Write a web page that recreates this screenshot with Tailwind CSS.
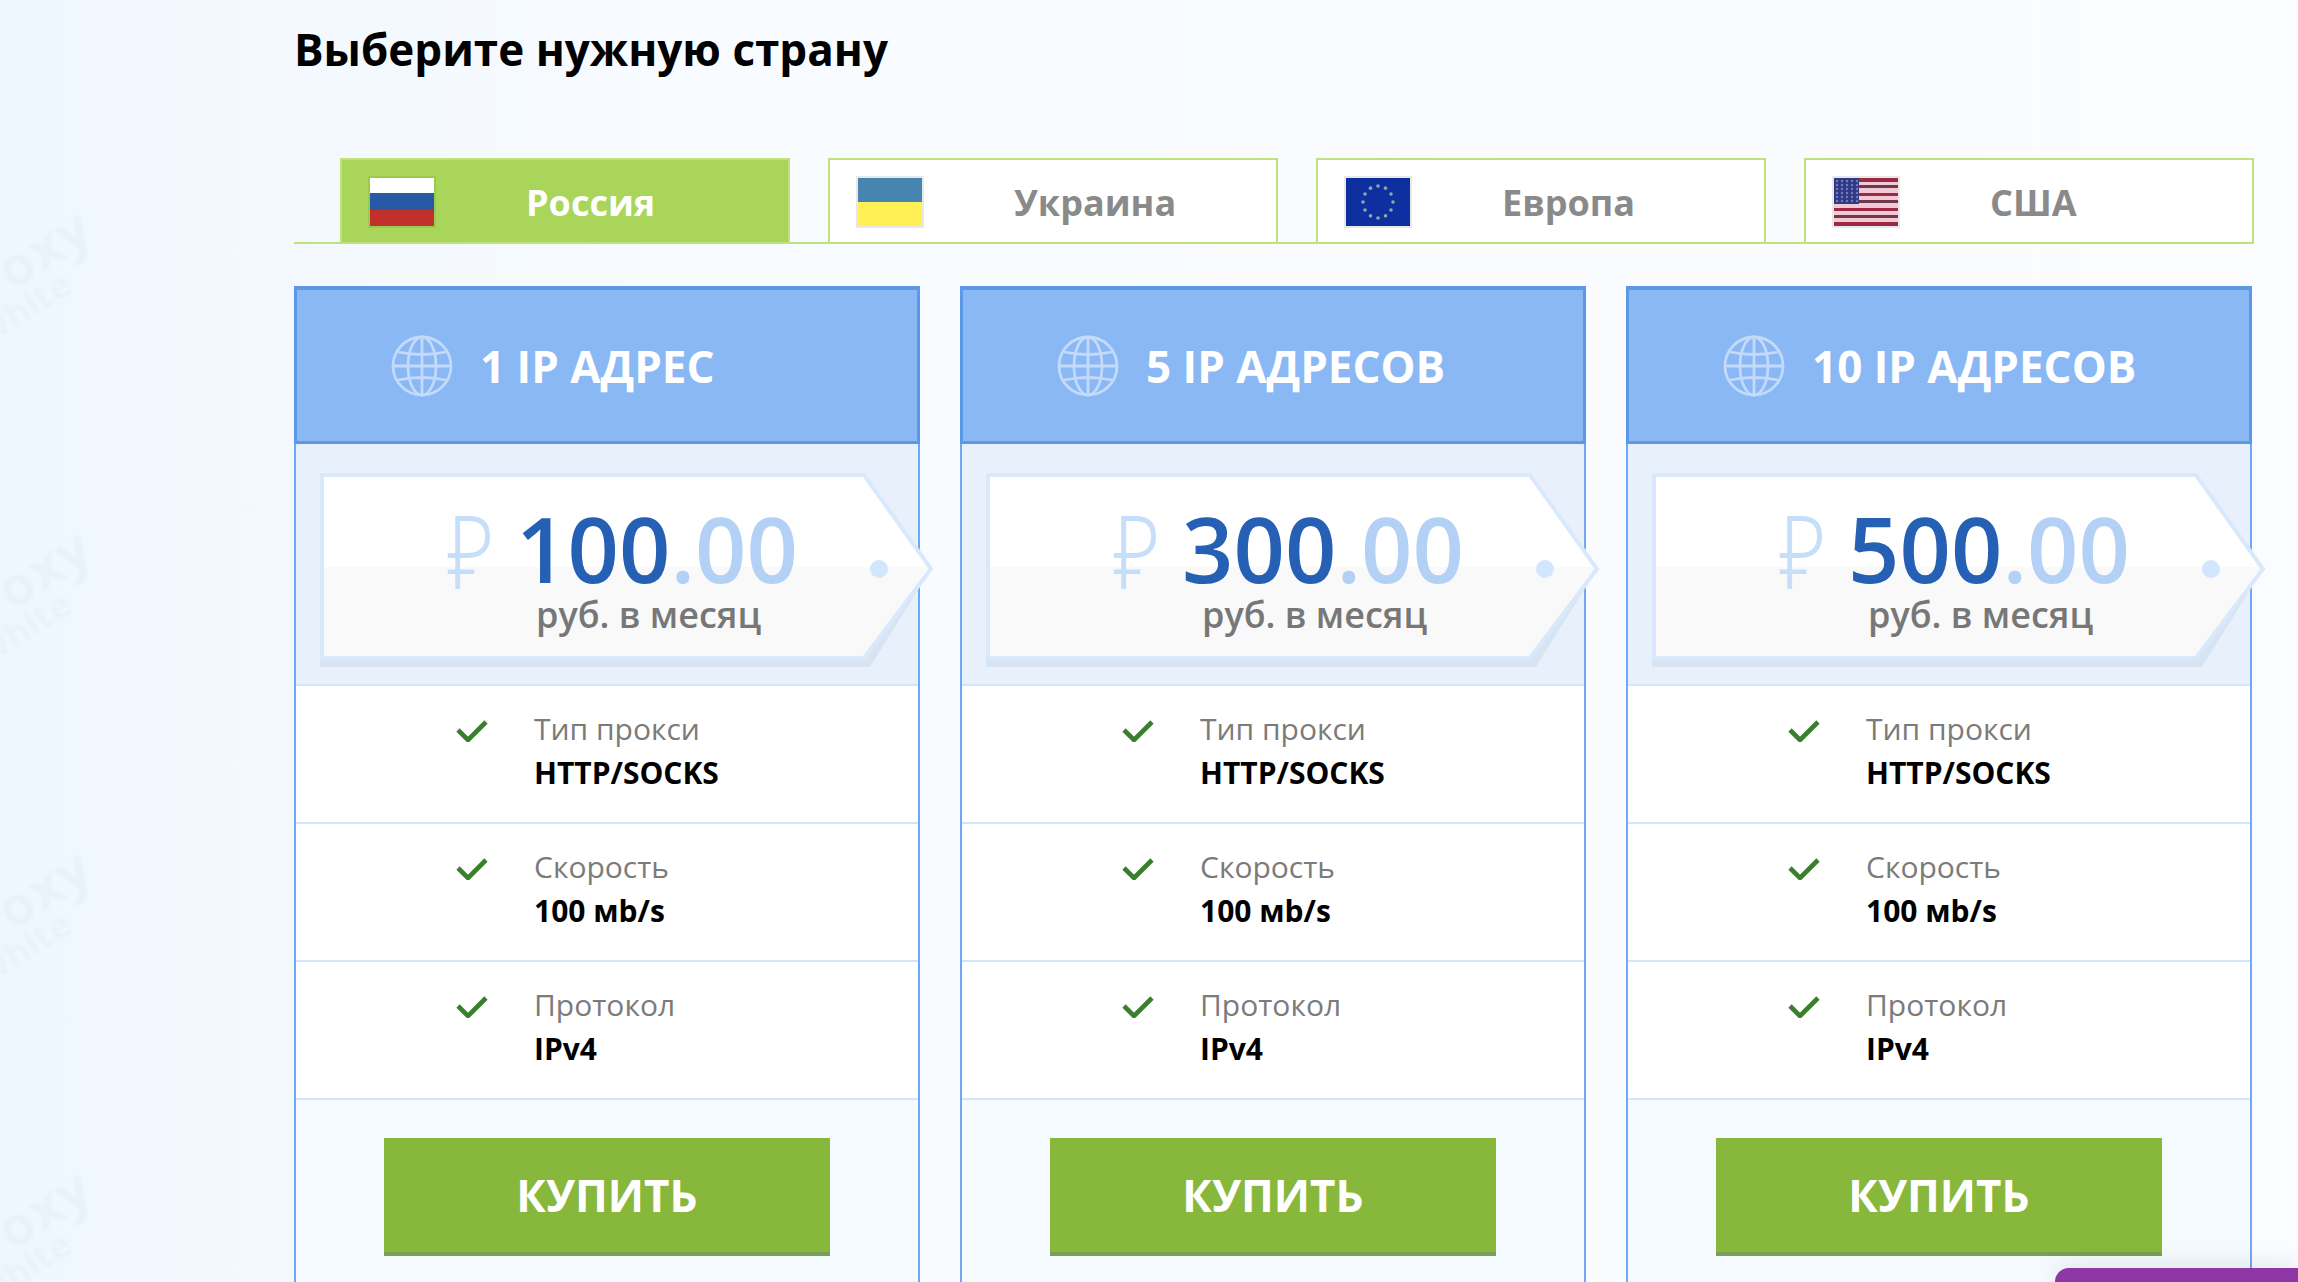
<!DOCTYPE html>
<html lang="ru">
<head>
    <meta charset="UTF-8">
    <title>Выберите нужную страну</title>
    <script src="https://cdn.jsdelivr.net/npm/@tailwindcss/browser@4"></script>
</head>
<body class="m-0">
    <div class="relative h-[1282px] w-[2298px] overflow-hidden bg-gradient-to-r from-[#eff7fe] via-[#f8fbff] via-30% to-[#fbfcff] font-['Open_Sans','DejaVu_Sans',sans-serif]">

        <!-- Watermark of the page background -->
        <div id="marks"></div>

        <div class="relative pl-[294px]">
            <h1 class="h-[158px] pt-[27px] text-[44px] leading-[44px] font-bold text-black">Выберите нужную страну</h1>

            <!-- Country tabs -->
            <div id="tabs" class="flex h-[86px] w-[1960px] gap-[38px] border-b-2 border-[#c0e27c] pl-[46px]"></div>

            <!-- Plans -->
            <div id="plans" class="mt-[42px] flex gap-[40px]"></div>
        </div>

        <!-- Chat widget peeking in from the bottom -->
        <div class="absolute bottom-0 left-[2055px] h-[14px] w-[243px] rounded-tl-[14px] bg-[#8e36a6] shadow-[0_0_24px_rgba(0,0,0,0.14)]"></div>
    </div>

    <script>
        const flags = {
            ru: `<rect width="64" height="48" fill="#c32f2a"/><rect width="64" height="32" fill="#2759a5"/><rect width="64" height="15" fill="#fff"/>`,
            ua: `<rect width="64" height="48" fill="#fef055"/><rect width="64" height="24" fill="#4685b0"/>`,
            eu: `<rect width="64" height="48" fill="#0e2f9f"/>` + [...Array(12)].map((_, i) => {
                const a = i * Math.PI / 6;
                return `<circle cx="${32 + 15 * Math.sin(a)}" cy="${24 - 16 * Math.cos(a)}" r="1.8" fill="#8fa9a8"/>`;
            }).join(""),
            us: `<rect width="64" height="48" fill="#f4c9d6"/>` + [0, 7, 15, 22, 30, 37, 44].map((y, i) =>
                `<rect y="${y}" width="64" height="${i == 0 || i == 6 ? 4 : 3}" fill="${i % 2 ? "#6d3a50" : "#9c2a45"}"/>`).join("") +
                `<rect width="25" height="26" fill="#2f3a86"/>` + [...Array(30)].map((_, i) =>
                `<circle cx="${3 + (i % 5) * 5}" cy="${3 + Math.floor(i / 5) * 4}" r="1.2" fill="#7b78b8"/>`).join("")
        };

        const countries = [
            { name: "Россия", flag: "ru", active: true },
            { name: "Украина", flag: "ua" },
            { name: "Европа", flag: "eu" },
            { name: "США", flag: "us" }
        ];

        document.getElementById("tabs").innerHTML = countries.map(c => `
            <div class="box-border flex h-[86px] w-[450px] items-start gap-[90px] border-2 border-[#c0e27c] pl-[26px] pt-[16px] ${c.active ? "bg-[#aad55b] text-white" : "bg-white text-[#8a8a8a]"}">
                <svg class="box-content block h-[48px] w-[64px] shrink-0 border-2 ${c.active ? "border-[#9acb4e]" : "border-[#e8e8e8]"}" viewBox="0 0 64 48">${flags[c.flag]}</svg>
                <span class="mt-[5px] text-[36px] leading-[44px] font-bold">${c.name}</span>
            </div>`).join("");

        const plans = [
            { title: "1 IP АДРЕС", price: "100" },
            { title: "5 IP АДРЕСОВ", price: "300" },
            { title: "10 IP АДРЕСОВ", price: "500" }
        ];

        const features = [
            ["Тип прокси", "HTTP/SOCKS"],
            ["Скорость", "100 мb/s"],
            ["Протокол", "IPv4"]
        ];

        const globe = `
            <svg class="h-[62px] w-[62px] shrink-0 blur-[0.6px]" viewBox="0 0 62 62" fill="none" stroke="#c3dafa" stroke-width="2.8">
                <circle cx="31" cy="31" r="29"/>
                <ellipse cx="31" cy="31" rx="14" ry="29"/>
                <path d="M31 2v58M2 31h58M7 17q24 5 48 0M7 45q24-5 48 0"/>
            </svg>`;

        document.getElementById("plans").innerHTML = plans.map((p, i) => `
            <div class="flex h-[1100px] w-[626px] flex-col">
                <div class="box-border flex h-[158px] items-center gap-[27px] border-x-[3px] border-t-4 border-b-[3px] border-[#5b99e6] bg-[#89b8f5] pl-[94px] text-[44px] leading-[44px] font-bold text-white">
                    ${globe}
                    <span>${p.title}</span>
                </div>
                <div class="flex flex-1 flex-col border-x-2 border-[#6ea9f5] bg-[#f5faff]">
                    <div class="relative box-border h-[242px] border-b-2 border-[#d2e6fd] bg-[#e8f0fb]">
                        <svg class="absolute left-[24px] top-[29px] h-[194px] w-[616px] overflow-visible" viewBox="0 0 616 194" fill="none">
                            <defs>
                                <linearGradient id="tag${i}" x1="0" y1="0" x2="0" y2="1">
                                    <stop offset="0.5" stop-color="#ffffff"/>
                                    <stop offset="0.5" stop-color="#f9f9f9"/>
                                </linearGradient>
                            </defs>
                            <polygon points="0,8 550,8 606,104 550,194 0,194" fill="#d8e4f1"/>
                            <polygon points="2,2 544,2 611,96 544,185 2,185" fill="url(#tag${i})" stroke="#d8e9fd" stroke-width="4"/>
                            <circle cx="559" cy="96" r="9" fill="#d2e6fd"/>
                        </svg>
                        <div class="relative flex items-baseline pl-[151px] pt-[58px] text-[90px] leading-[90px] font-semibold">
                            <span class="w-[69px] origin-[0_70%] translate-y-[5px] scale-x-[0.88] scale-y-[1.08] font-['Noto_Sans','DejaVu_Sans',sans-serif] text-[94px] font-light text-[#c5defa]">₽</span>
                            <span class="text-[#2560b4]">${p.price}<span class="text-[#b3d1f4]">.00</span></span>
                        </div>
                        <div class="relative mt-[4px] pl-[240px] text-[36px] leading-[36px] font-semibold text-[#777777]">руб. в месяц</div>
                    </div>
                    ${features.map(f => `
                    <div class="box-border flex h-[138px] border-b-2 border-[#d2e6fd] bg-white pl-[160px] pt-[21px]">
                        <svg class="mt-[13px] h-[22px] w-[32px] shrink-0" viewBox="0 0 32 22" fill="none" stroke="#3a7f2d" stroke-width="4.6">
                            <path d="M2 10l10 10L30 2"/>
                        </svg>
                        <div class="ml-[46px] text-[30px] leading-[43px]">
                            <div class="text-[#7b7b7b]">${f[0]}</div>
                            <div class="mt-[1px] font-bold text-black">${f[1]}</div>
                        </div>
                    </div>`).join("")}
                    <div class="px-[88px] pt-[38px]">
                        <button class="box-border flex h-[118px] w-[446px] items-center justify-center border-b-4 border-[#789f58] bg-[#87b83c] text-[44px] leading-[44px] font-bold text-white">КУПИТЬ</button>
                    </div>
                </div>
            </div>`).join("");

        document.getElementById("marks").innerHTML = [0, 320, 640, 960].map(dy => `
            <div class="absolute left-[-64px] w-[170px] rotate-[-32deg] text-right font-bold text-[#e9f2fb] blur-[0.8px]" style="top:${238 + dy}px">
                <div class="text-[56px] leading-[50px]">proxy</div>
                <div class="pr-[46px] text-[36px] leading-[34px]">white</div>
            </div>`).join("");
    </script>
</body>
</html>
